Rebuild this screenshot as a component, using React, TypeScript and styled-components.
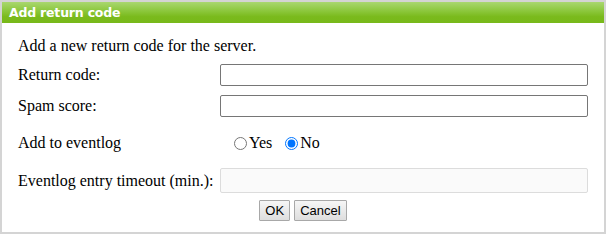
import React from 'react';
import styled, { createGlobalStyle } from 'styled-components';

const GlobalStyle = createGlobalStyle`
  html, body {
    margin: 0;
    padding: 0;
    background: #ffffff;
  }
`;

const Dialog = styled.div`
  box-sizing: border-box;
  width: 606px;
  height: 234px;
  border: 2px solid #d4d4d4;
  background: #ffffff;
  font-family: 'Liberation Serif', 'Times New Roman', serif;
  font-size: 16px;
  color: #000000;
`;

const TitleBar = styled.div`
  height: 21px;
  line-height: 21px;
  padding-left: 7px;
  background: linear-gradient(#a9d770 0%, #8ac639 45%, #7aba1c 70%, #78b91a 100%);
  color: #ffffff;
  font-family: 'DejaVu Sans', Verdana, sans-serif;
  font-weight: bold;
  font-size: 12.5px;
  letter-spacing: -0.2px;
`;

const Body = styled.div`
  padding: 13px 16px 0 16px;
`;

const Intro = styled.div`
  line-height: 19px;
`;

const Row = styled.div<{ $top: number; $height: number }>`
  display: flex;
  align-items: center;
  margin-top: ${(p) => p.$top}px;
  height: ${(p) => p.$height}px;
`;

const Label = styled.label`
  width: 202px;
  flex: none;
`;

const TextInput = styled.input<{ $tall?: boolean }>`
  box-sizing: border-box;
  width: 368px;
  height: ${(p) => (p.$tall ? 25 : 22)}px;
  margin: 0;
  padding: 1px 2px;
  border: 1px solid #767676;
  border-radius: 2px;
  background: #ffffff;
  font-family: 'Liberation Sans', Arial, sans-serif;
  font-size: 13px;

  &:disabled {
    border-color: #dcdcdc;
    background: #fafafa;
  }
`;

const RadioGroup = styled.div`
  display: flex;
  align-items: center;
  padding-left: 9px;
`;

const RadioOption = styled.label`
  display: flex;
  align-items: center;
  margin-right: 8px;
`;

const Radio = styled.input`
  width: 13px;
  height: 13px;
  margin: 0 2px 0 5px;
  accent-color: #0075ff;
`;

const Buttons = styled.div`
  display: flex;
  justify-content: center;
  gap: 4px;
  margin-top: 7px;
`;

const Button = styled.button`
  height: 21px;
  padding: 0 5px;
  margin: 0;
  border: 1px solid #a8a8a8;
  border-radius: 1px;
  background: linear-gradient(#f6f6f6, #dedede);
  font-family: 'Liberation Sans', Arial, sans-serif;
  font-size: 13px;
  color: #000000;
`;

export default function App() {
  return (
    <>
      <GlobalStyle />
      <Dialog>
        <TitleBar>Add return code</TitleBar>
        <Body>
          <Intro>Add a new return code for the server.</Intro>
          <Row $top={9} $height={22}>
            <Label>Return code:</Label>
            <TextInput type="text" />
          </Row>
          <Row $top={9} $height={22}>
            <Label>Spam score:</Label>
            <TextInput type="text" />
          </Row>
          <Row $top={16} $height={20}>
            <Label>Add to eventlog</Label>
            <RadioGroup>
              <RadioOption>
                <Radio type="radio" name="eventlog" />
                Yes
              </RadioOption>
              <RadioOption>
                <Radio type="radio" name="eventlog" defaultChecked />
                No
              </RadioOption>
            </RadioGroup>
          </Row>
          <Row $top={15} $height={25}>
            <Label>Eventlog entry timeout (min.):</Label>
            <TextInput type="text" disabled $tall />
          </Row>
          <Buttons>
            <Button>OK</Button>
            <Button>Cancel</Button>
          </Buttons>
        </Body>
      </Dialog>
    </>
  );
}
